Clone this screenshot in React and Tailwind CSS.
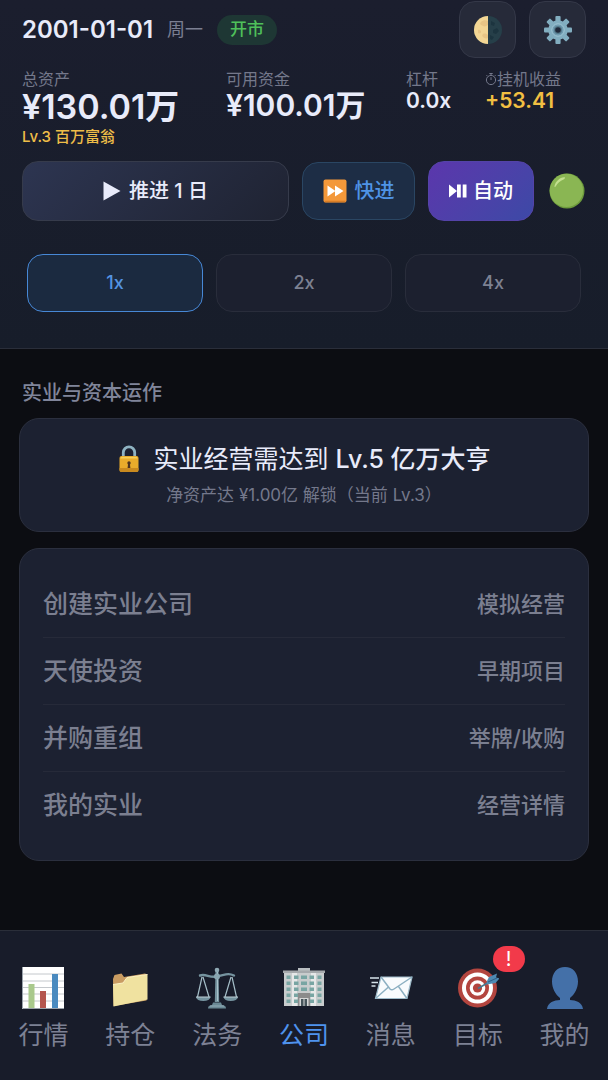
import React, { useState } from 'react';
import clsx from 'clsx';

const MoonIcon = () => (
  <svg viewBox="0 0 28 28" className="w-7 h-7" aria-hidden="true">
    <circle cx="14" cy="14" r="14" fill="#263f49" />
    <path d="M14 0a14 14 0 0 0 0 28z" fill="#f3d694" />
    <path d="M7 6c2-2 5-2 7-1v4c-2 1-3 2-5 1S5 8 7 6zM4 14c2-1 3 1 3 2s-2 2-3 1zM9 18c2-1 4 0 5 1v3c-2 1-4 0-5-1s-1-2 0-3z" fill="#e8c585" />
    <path d="M17 5l4 2-1 3-3-1zM19 14l4-2 2 3-3 3-3-1zM16 19l4 2-2 3-2-1z" fill="#1c343f" />
  </svg>
);

const GearIcon = () => (
  <svg viewBox="0 0 28 28" className="w-7 h-7" aria-hidden="true">
    <g fill="#82aec0">
      <rect x="11.4" y="0" width="5.2" height="28" rx="1" />
      <rect x="11.4" y="0" width="5.2" height="28" rx="1" transform="rotate(45 14 14)" />
      <rect x="11.4" y="0" width="5.2" height="28" rx="1" transform="rotate(90 14 14)" />
      <rect x="11.4" y="0" width="5.2" height="28" rx="1" transform="rotate(135 14 14)" />
      <circle cx="14" cy="14" r="9.8" />
    </g>
    <circle cx="14" cy="14" r="6.2" fill="#6f9bb0" stroke="#a2c8d6" strokeWidth="1" />
    <circle cx="14" cy="14" r="4" fill="#54798a" />
    <circle cx="14" cy="14" r="2.8" fill="#20293a" />
  </svg>
);

const StopwatchIcon = () => (
  <svg viewBox="0 0 12 14" className="w-3 h-3.5 shrink-0" fill="none" stroke="currentColor" aria-hidden="true">
    <circle cx="6" cy="8" r="4.6" />
    <path d="M6 3.4V1.5M4.3 1.5h3.4M6 8V5.2M9.5 4.2l1-1M2.5 4.2l-1-1" />
  </svg>
);

const FastForwardIcon = () => (
  <svg viewBox="0 0 24 24" className="w-6 h-6" aria-hidden="true">
    <rect x="0.5" y="0.5" width="23" height="23" rx="2" fill="#f3983a" />
    <path d="M1.5 22.5h21" stroke="#d87d25" strokeWidth="1.5" />
    <path d="M4.5 6.5l8 5.5-8 5.5zM12 6.5l8.5 5.5-8.5 5.5z" fill="#fff" />
  </svg>
);

const AutoIcon = () => (
  <svg viewBox="0 0 18 14" className="w-[18px] h-3.5" fill="currentColor" aria-hidden="true">
    <path d="M0 0.500l8 6.500-8 6.500zM8 0.500h3.800v13H8zM13.700 0.500h3.800v13h-3.800z" />
  </svg>
);

const GreenCircle = () => (
  <svg viewBox="0 0 36 36" className="w-9 h-9" aria-hidden="true">
    <circle cx="18" cy="18" r="17.5" fill="#6d9b3c" />
    <circle cx="17.4" cy="17.4" r="16.7" fill="#8ab653" />
    <path d="M5.5 13C6.5 8 11 4.500 15 4.200c1.800 0 1 1.600-.5 2.200C11 7.800 8.500 10 7 13c-.8 1.500-1.800 1.200-1.500 0z" fill="#c3e08f" />
  </svg>
);

const LockIcon = () => (
  <svg viewBox="-2 0 24 28" className="w-6 h-7" aria-hidden="true">
    <path d="M4.300 13V7.500a5.700 5.700 0 0 1 11.400 0V13" fill="none" stroke="#8fb3c2" strokeWidth="2.800" />
    <rect x="0.500" y="11" width="19" height="16" rx="2" fill="#e9ac2b" />
    <path d="M.5 23h19v2a2 2 0 0 1-2 2h-15a2 2 0 0 1-2-2z" fill="#c98a1f" />
    <path d="M1.500 13.500c0-1 .7-1.500 1.500-1.500h14c1 0 1.500.5 1.500 1.500z" fill="#f8cf56" />
    <circle cx="10" cy="18" r="1.700" fill="#4b3320" />
    <path d="M9.200 18h1.600l.6 5H8.600z" fill="#4b3320" />
  </svg>
);

const ChartIcon = () => (
  <svg viewBox="0 0 42 42" className="w-[42px] h-[42px]" aria-hidden="true">
    <rect width="42" height="42" fill="#fff" />
    <path d="M0 7h42M0 14h42M0 20.500h42M0 27h42M0 34h42" stroke="#c4c8cc" />
    <rect x="6.500" y="17" width="6" height="24" fill="#a9c98c" />
    <rect x="18" y="24" width="6" height="17" fill="#b5564e" />
    <rect x="30" y="7" width="6" height="34" fill="#4a8abf" />
    <path d="M.5 0v41.500H42" fill="none" stroke="#9aa2ab" />
  </svg>
);

const FolderIcon = () => (
  <svg viewBox="0 0 42 42" className="w-[42px] h-[42px]" aria-hidden="true">
    <path d="M4 12l1.500-4 7-1.500L15 10l21-3.500 2 1-.5 26L4.500 39z" fill="#c99c62" />
    <path d="M4 17.500l10-1.500 4-5.500 20.500-3v25L4.500 39.500z" fill="#f0e2a0" />
    <path d="M4 17.500l10-1.500 4-5.500 20.500-3" fill="none" stroke="#fbf2c4" />
  </svg>
);

const ScalesIcon = () => (
  <svg viewBox="0 0 42 42" className="w-[42px] h-[42px]" fill="none" aria-hidden="true">
    <path d="M4 8.500c6-2 9 2.500 17 1s11-4 17-1" stroke="#75939f" strokeWidth="2.400" strokeLinecap="round" />
    <path d="M6 10L1.500 30M7 10l6 20M35 10l-6 20M36 10l4.500 20" stroke="#a4bdc7" strokeWidth="1.200" />
    <path d="M19.500 4h3l.7 31h-4.400z" fill="#75939f" />
    <path d="M21.500 5v29" stroke="#a9c1ca" />
    <circle cx="21" cy="3" r="2.300" fill="#8fa9b4" />
    <circle cx="21" cy="9.500" r="3" fill="#89a5b0" />
    <path d="M0 30h14.500c-.5 2.500-3 4-7.200 4S.5 32.500 0 30zM27.500 30H42c-.5 2.500-3 4-7.200 4s-6.800-1.500-7.300-4z" fill="#75939f" />
    <path d="M0 30h14.500M27.500 30H42" stroke="#c0d2d9" />
    <path d="M17 35.500h8l1 2.500c3 .3 4 1.500 4 3.500H12c0-2 1-3.200 4-3.500z" fill="#6b8995" />
    <path d="M14 39h14" stroke="#94aeb9" />
  </svg>
);

const BuildingIcon = () => (
  <svg viewBox="0 0 42 42" className="w-[42px] h-[42px]" aria-hidden="true">
    <path d="M15 1h12v4H15z" fill="#b9bec1" />
    <path d="M1 5h40v34H1z" fill="#c8cccd" />
    <path d="M9 5h5v34H9zM28 5h5v34h-5z" fill="#e6e8e8" />
    <path d="M0 3.500h42V6H0z" fill="#a5a9ac" />
    <g fill="#78a5a3">
      {[8.5, 14.500, 20.500, 26.500, 32.500].map((y) => (
        <path key={y} d={`M3.500 ${y}h4v3.500h-4zM11 ${y}h4.500v3.500H11zM26.500 ${y}H31v3.500h-4.500zM34.500 ${y}h4v3.500h-4z`} />
      ))}
      <path d="M18 8.500h6V12h-6zM18 14.500h6V18h-6zM18 20.500h6V24h-6z" />
    </g>
    <path d="M15 26h12v13H15z" fill="#8b8b8b" />
    <path d="M16.500 31h9v8h-9z" fill="#d6d8d8" />
    <path d="M18 32h2.500v7H18zM21.500 32H24v7h-2.500z" fill="#47555b" />
  </svg>
);

const MailIcon = () => (
  <svg viewBox="0 0 44 42" className="w-11 h-[42px]" aria-hidden="true">
    <path d="M1 11h9M2.500 15.500H9M2.500 19h4" stroke="#d5e2ea" strokeWidth="1.600" />
    <path d="M12 10h31l-5 21.500H6.500z" fill="#f8fbfd" stroke="#9fbccb" strokeWidth="1.200" />
    <path d="M12 10l9 12c1 1 2.500 1 4 0L43 10M6.500 31.500L19.500 20M38 31.500L29.500 19.500" fill="none" stroke="#8cb0c2" strokeWidth="1.500" />
  </svg>
);

const TargetIcon = () => (
  <svg viewBox="0 0 42 42" className="w-[42px] h-[42px]" aria-hidden="true">
    <circle cx="20.500" cy="21" r="19.500" fill="#b3453f" />
    <circle cx="20.500" cy="21" r="15.500" fill="#fff" />
    <circle cx="20.500" cy="21" r="11.500" fill="#b3453f" />
    <circle cx="20.500" cy="21" r="7.800" fill="#fff" />
    <circle cx="20.500" cy="21" r="4.600" fill="#b3453f" />
    <path d="M21 21.500l12-7" stroke="#45778f" strokeWidth="1.600" />
    <path d="M30 14l2-4 8-3.500-1 4 3.500 1-4 4.500-9 1.500z" fill="#4e8ab3" />
    <path d="M31 15l9-4" stroke="#2f5f86" />
  </svg>
);

const PersonIcon = () => (
  <svg viewBox="0 0 42 42" className="w-[42px] h-[42px]" aria-hidden="true">
    <path d="M21 0c8 0 13 6 13 14.500 0 7-3.500 13-8 16.500v2c6 .3 12 2 13 9H3c1-7 7-8.700 13-9v-2C11.500 27.500 8 21.500 8 14.500 8 6 13 0 21 0z" fill="#4470a8" />
  </svg>
);

const speeds = ['1x', '2x', '4x'];

const ventures = [
  { name: '创建实业公司', note: '模拟经营' },
  { name: '天使投资', note: '早期项目' },
  { name: '并购重组', note: '举牌/收购' },
  { name: '我的实业', note: '经营详情' },
];

const tabs = [
  { id: 'market', label: '行情', Icon: ChartIcon },
  { id: 'holdings', label: '持仓', Icon: FolderIcon },
  { id: 'legal', label: '法务', Icon: ScalesIcon },
  { id: 'company', label: '公司', Icon: BuildingIcon },
  { id: 'messages', label: '消息', Icon: MailIcon },
  { id: 'goals', label: '目标', Icon: TargetIcon, badge: '!' },
  { id: 'me', label: '我的', Icon: PersonIcon },
];

const iconButton = 'w-[57px] h-[57px] rounded-2xl border border-[#343848] bg-[#262a39] flex items-center justify-center';

const App = () => {
  const [speed, setSpeed] = useState('1x');
  const [tab, setTab] = useState('company');

  return (
    <div className="min-h-screen flex flex-col bg-[#0c0d12] text-[#e8ebfa] font-['Inter','Noto_Sans_CJK_SC',sans-serif]">
      <header className="px-[22px] pt-px pb-9 bg-linear-to-b from-[#1b1e2e] to-[#171d2a] border-b border-[#2a2e3a]">
        <div className="flex items-center justify-between">
          <div className="flex items-center">
            <h1 className="text-2xl font-semibold">2001-01-01</h1>
            <span className="ml-3.5 text-lg text-[#7b7f92]">周一</span>
            <span className="ml-3.5 h-[30px] px-[13px] rounded-full bg-[#1e3734] text-[#4fc05a] text-[17px] font-medium flex items-center">开市</span>
          </div>
          <div className="flex gap-[13px]">
            <button type="button" aria-label="切换主题" className={iconButton}><MoonIcon /></button>
            <button type="button" aria-label="设置" className={iconButton}><GearIcon /></button>
          </div>
        </div>

        <div className="mt-[11px] grid grid-cols-[204fr_180fr_79fr_101fr] whitespace-nowrap">
          <div>
            <div className="text-base leading-5 text-[#74788b]">总资产</div>
            <div className="text-[34px] leading-9 font-semibold">¥130.01万</div>
            <div className="text-[15px] leading-6 font-medium text-[#eebd48]">Lv.3 百万富翁</div>
          </div>
          <div>
            <div className="text-base leading-5 text-[#74788b]">可用资金</div>
            <div className="text-[30px] leading-8 font-semibold">¥100.01万</div>
          </div>
          <div>
            <div className="text-base leading-5 text-[#74788b]">杠杆</div>
            <div className="text-[21px] leading-6 font-semibold">0.0x</div>
          </div>
          <div>
            <div className="flex items-center text-base leading-5 text-[#74788b]"><StopwatchIcon />挂机收益</div>
            <div className="text-[21px] leading-6 font-semibold text-[#f2bf42]">+53.41</div>
          </div>
        </div>

        <div className="mt-3 flex items-center gap-[13px]">
          <button type="button" className="flex-1 h-[60px] rounded-2xl border border-[#363b4b] bg-linear-135 from-[#2d3551] to-[#1f2332] text-xl font-medium flex items-center justify-center gap-2">
            <svg viewBox="0 0 18 20" className="w-[18px] h-5" fill="currentColor" aria-hidden="true"><path d="M0.500 0.500L17.500 10 0.500 19.500z" /></svg>
            推进 1 日
          </button>
          <button type="button" className="w-[113px] h-[58px] rounded-2xl border border-[#2a4663] bg-[#1d2d45] text-[#4f93e6] text-xl font-medium flex items-center justify-center gap-2">
            <FastForwardIcon />快进
          </button>
          <button type="button" className="w-[106px] h-[60px] rounded-2xl border border-[#5443a8] bg-linear-135 from-[#5b36ac] to-[#3c49a6] text-white text-xl font-medium flex items-center justify-center gap-1.5">
            <AutoIcon />自动
          </button>
          <span role="img" aria-label="运行中" className="w-[39px] flex justify-center"><GreenCircle /></span>
        </div>

        <div className="mt-[33px] px-[5px] grid grid-cols-3 gap-[13px]">
          {speeds.map((s) => (
            <button
              key={s}
              type="button"
              aria-pressed={s === speed}
              onClick={() => setSpeed(s)}
              className={clsx(
                'h-[58px] rounded-2xl border text-lg font-medium',
                s === speed ? 'border-[#4788d6] bg-[#1b2a40] text-[#5493e2]' : 'border-[#292d3b] bg-[#1c202f] text-[#7d8192]'
              )}
            >
              {s}
            </button>
          ))}
        </div>
      </header>

      <main className="flex-1 px-[19px] pt-7 pb-10">
        <h2 className="pl-[3px] text-xl leading-8 font-medium text-[#80859a]">实业与资本运作</h2>

        <section className="mt-[9px] pt-[22px] pb-6 rounded-[20px] border border-[#2b2f3e] bg-[#1c2131] text-center">
          <p className="text-[25px] leading-9 flex items-center justify-center gap-3">
            <LockIcon />
            <span>实业经营需达到 <strong className="font-medium">Lv.5 亿万大亨</strong></span>
          </p>
          <p className="mt-1.5 text-[17px] leading-6 text-[#74788b]">净资产达 ¥1.00亿 解锁（当前 Lv.3）</p>
        </section>

        <ul className="mt-4 px-[23px] py-[22px] rounded-[20px] border border-[#2b2f3e] bg-[#1c2131] text-[#7b7f90] font-medium">
          {ventures.map((v) => (
            <li key={v.name} className="h-[67px] last:h-[66px] flex items-center justify-between border-b border-[#262a39] last:border-b-0">
              <span className="text-[25px] leading-10">{v.name}</span>
              <span className="text-[22px] leading-8">{v.note}</span>
            </li>
          ))}
        </ul>
      </main>

      <nav className="grid grid-cols-7 pt-9 pb-[29px] bg-[#181c2a] border-t border-[#2a2e39]">
        {tabs.map(({ id, label, Icon, badge }) => (
          <a
            key={id}
            href={`#${id}`}
            onClick={() => setTab(id)}
            aria-current={id === tab ? 'page' : undefined}
            className={clsx('flex flex-col items-center gap-2.5', id === tab ? 'text-[#4f93ee]' : 'text-[#7d8194]')}
          >
            <span className="relative">
              <Icon />
              {badge && (
                <span className="absolute -top-[21px] -right-[26px] w-8 h-[26px] rounded-full bg-[#f23a4a] text-white text-xl flex items-center justify-center">{badge}</span>
              )}
            </span>
            <span className="text-[25px] leading-8">{label}</span>
          </a>
        ))}
      </nav>
    </div>
  );
};

export default App;
